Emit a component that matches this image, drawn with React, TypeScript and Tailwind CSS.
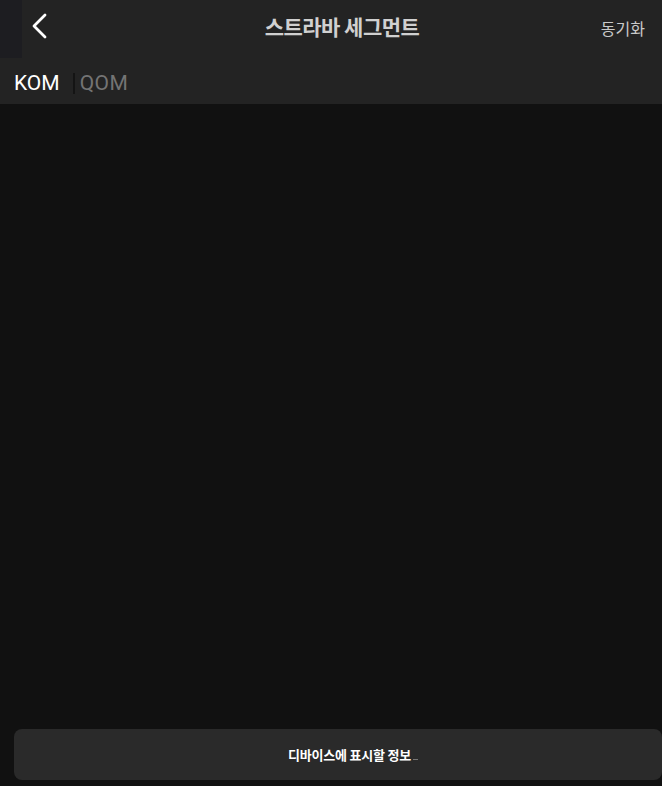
const font = { fontFamily: '"Noto Sans CJK KR", "Noto Sans", sans-serif' };

export default function App() {
  return (
    <div className="flex h-[786px] w-[662px] flex-col overflow-hidden bg-[#111111]" style={font}>
      <header className="relative h-[104px] bg-[#232323]">
        <div className="absolute left-0 top-0 h-[58px] w-[22px] bg-[#1d1d21]" />
        <div className="relative flex h-[56px] items-center justify-between pl-[31px] pr-[17px]">
          <svg width="18" height="26" viewBox="0 0 18 26" fill="none" className="mt-[-4px]">
            <polyline points="14,2 3,13 14,24" stroke="white" strokeWidth="2.8" strokeLinecap="round" strokeLinejoin="round" />
          </svg>
          <h1 className="absolute left-[342px] top-[11px] -translate-x-1/2 text-[21px] font-bold tracking-tight text-[#d0d0d0]">
            스트라바 세그먼트
          </h1>
          <button className="text-[16px] text-[#c9c9c9]">동기화</button>
        </div>
        <div className="flex items-center pl-[14px] pt-[13px]">
          <span className="text-[21px] leading-[28px] text-white" style={{ fontFamily: "Roboto, sans-serif" }}>
            KOM
          </span>
          <span className="ml-[13px] mr-[5px] h-[21px] w-[2px] bg-[#141414]" />
          <span className="text-[21px] leading-[28px] tracking-[0.5px] text-[#747474]" style={{ fontFamily: "Roboto, sans-serif" }}>
            QOM
          </span>
        </div>
      </header>
      <main className="flex-1" />
      <div className="pb-[6px] pl-[14px]">
        <button className="flex h-[51px] w-[648px] items-center justify-center rounded-[8px] bg-[#2a2a2a] pl-[30px] text-[13px] font-bold tracking-[-0.2px] text-white">
          디바이스에 표시할 정보
          <span className="ml-[2px] mt-[10px] h-[1px] w-[5px] bg-[#777]" />
        </button>
      </div>
    </div>
  );
}
